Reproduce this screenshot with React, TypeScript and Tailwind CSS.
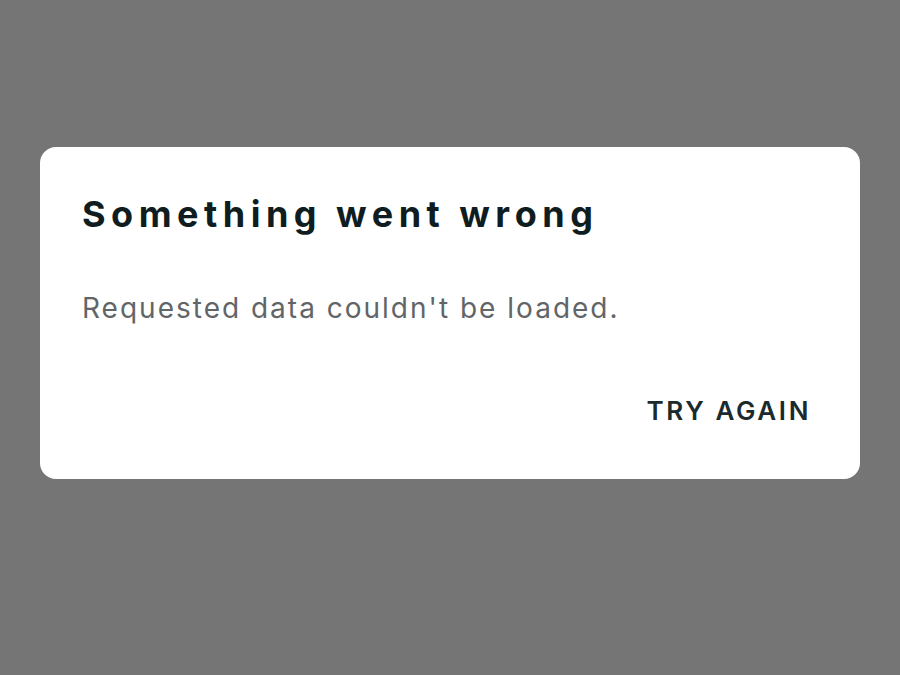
export default function App() {
  return (
    <div
      className="w-[900px] h-[675px] bg-[#757575] pt-[147px] px-[40px]"
      style={{ fontFamily: "Inter, 'Noto Sans', sans-serif" }}
    >
      <div className="flex flex-col h-[332px] rounded-[16px] bg-white pl-[42px] pr-[49px] pt-[45px]">
        <h1 className="text-[36px] leading-[44px] font-bold text-[#0f1c20] tracking-[5.5px]">
          Something went wrong
        </h1>
        <p className="mt-[52px] text-[28px] leading-[40px] text-[#626567] tracking-[2px]">
          Requested data couldn't be loaded.
        </p>
        <div className="flex justify-end mt-[66px]">
          <button
            type="button"
            className="text-[26px] leading-[34px] font-semibold tracking-[2.6px] text-[#1b2a2c]"
          >
            TRY AGAIN
          </button>
        </div>
      </div>
    </div>
  );
}
